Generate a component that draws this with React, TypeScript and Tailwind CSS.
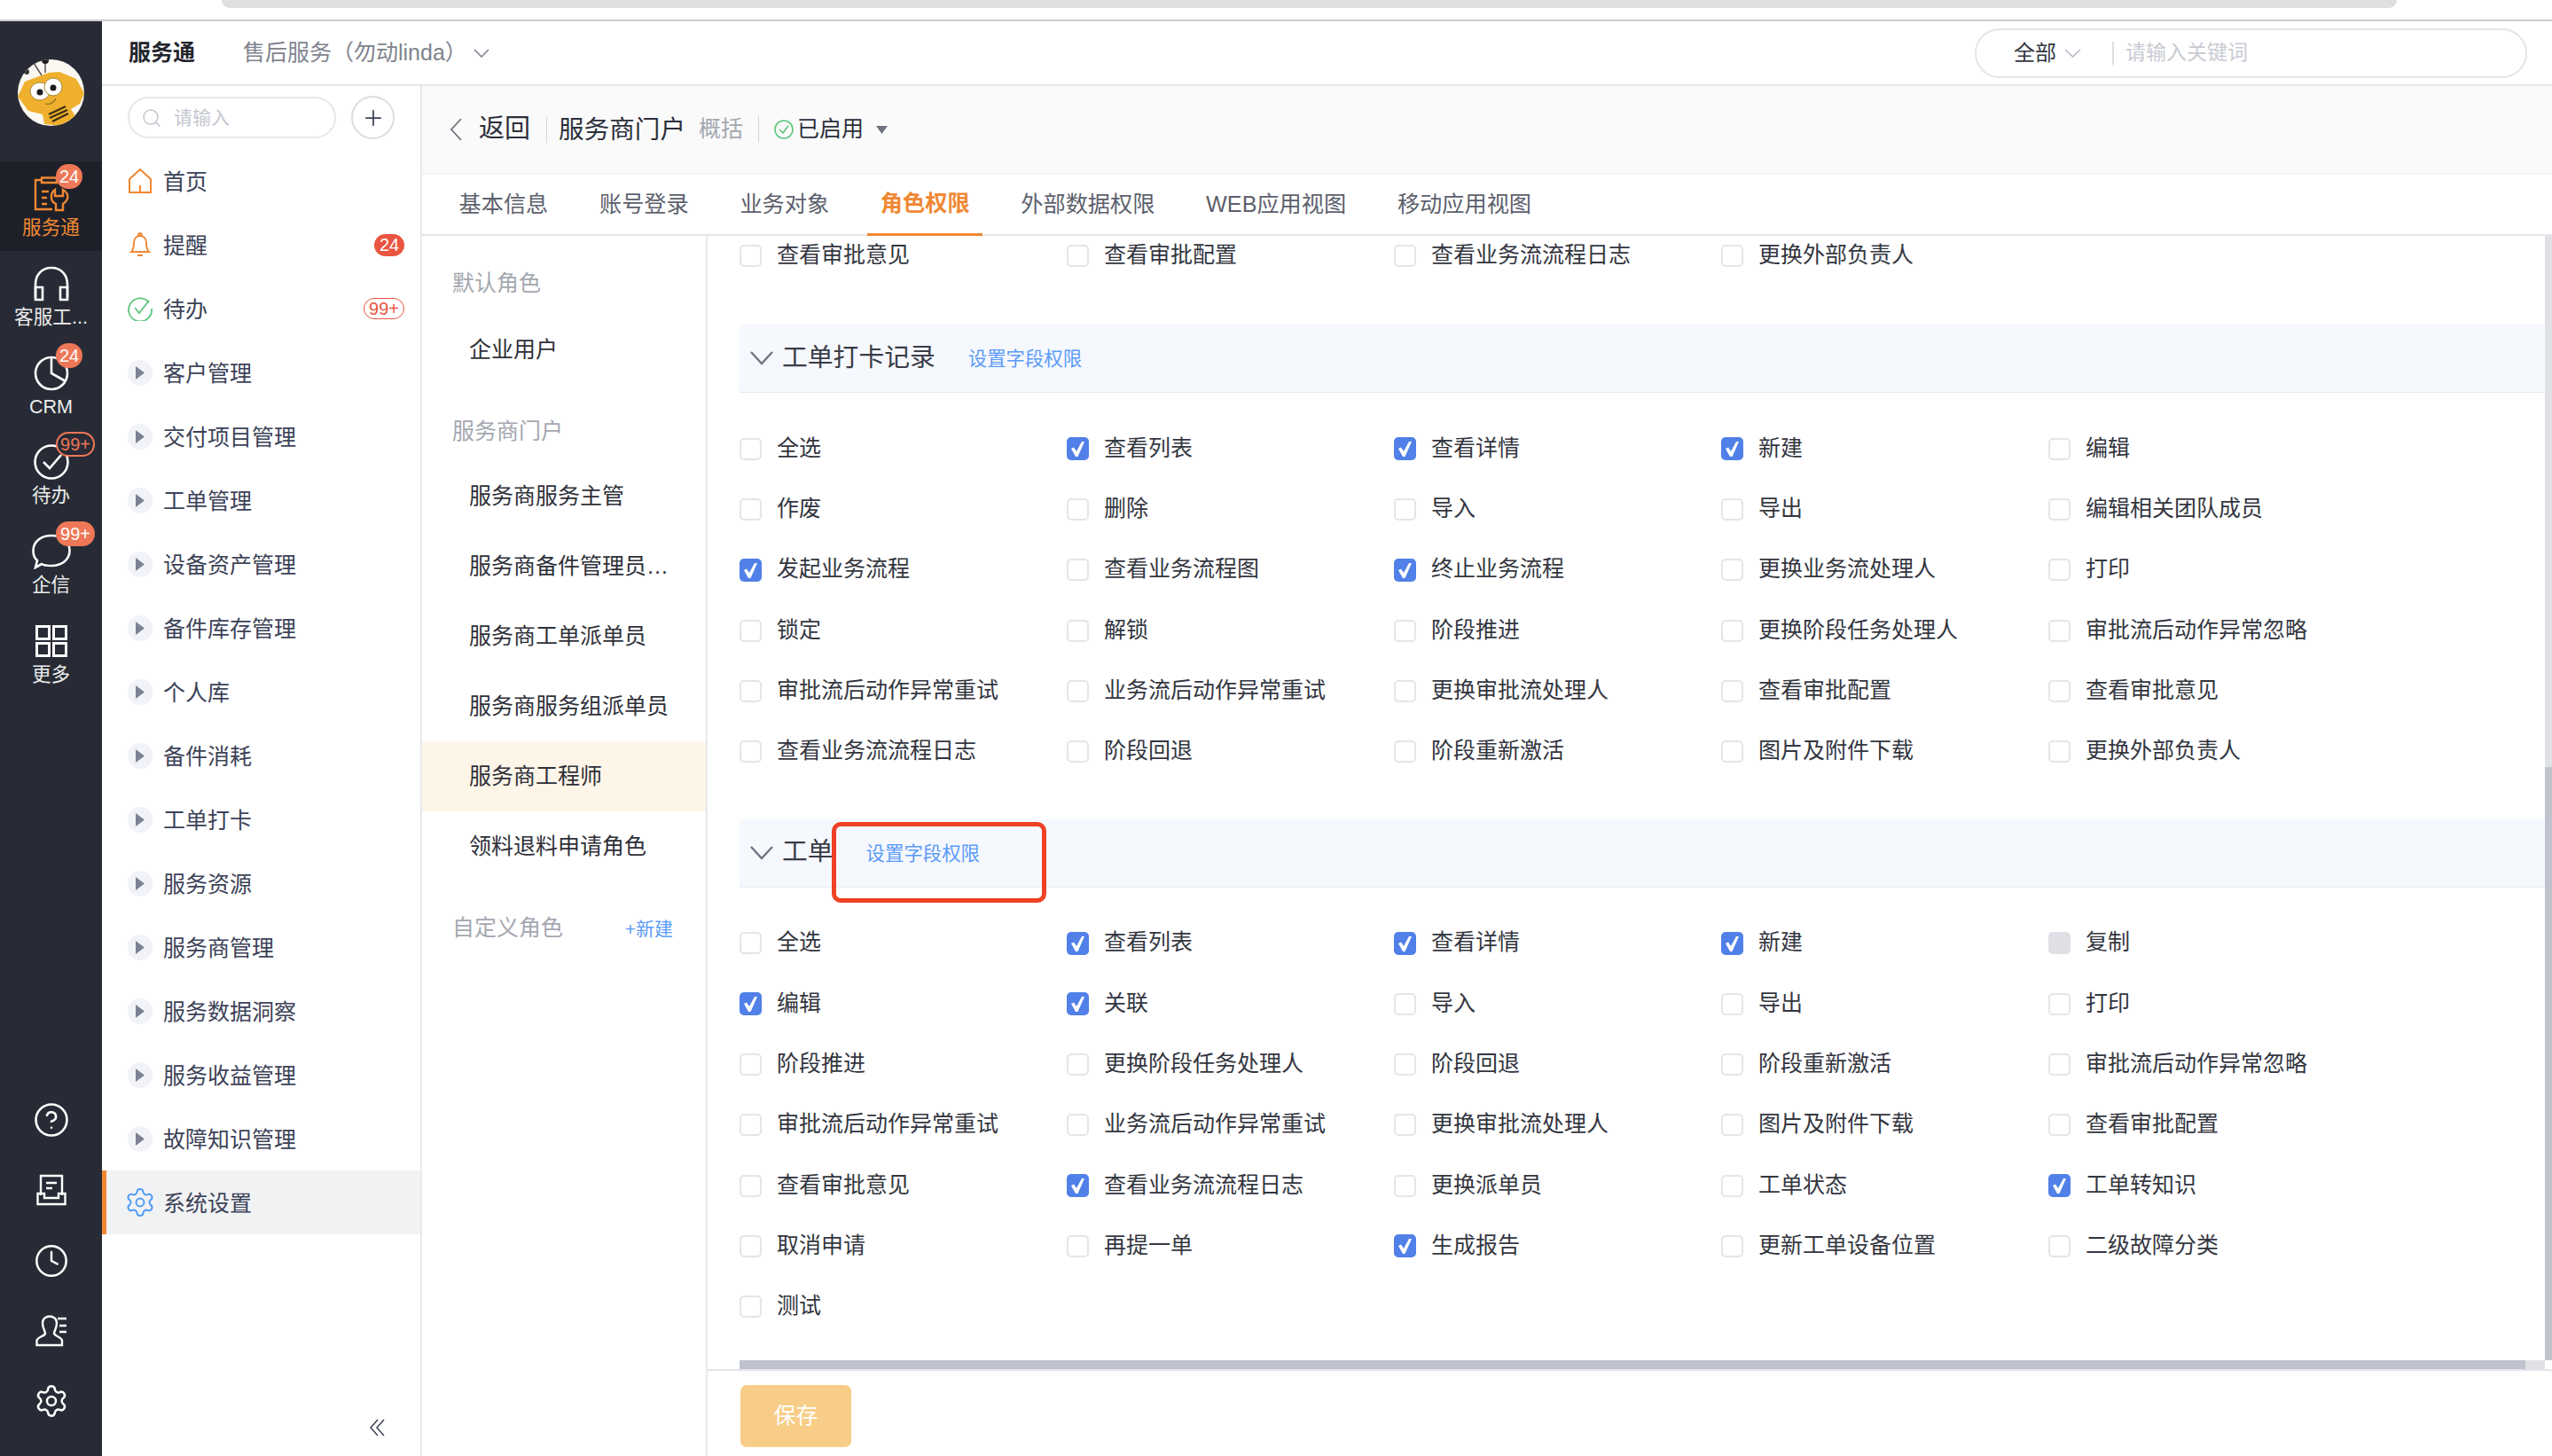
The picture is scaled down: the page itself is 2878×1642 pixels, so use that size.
import { CircleHelp, Clock, Plus, Search, Settings } from "lucide-react";

type Perm = [string, "on" | "off" | "disabled"];

const p = (label: string, state: "on" | "off" | "disabled" = "off"): Perm => [label, state];

const topRow: Perm[] = [p("查看审批意见"), p("查看审批配置"), p("查看业务流流程日志"), p("更换外部负责人")];

const clockInRows: Perm[] = [
  p("全选"), p("查看列表", "on"), p("查看详情", "on"), p("新建", "on"), p("编辑"),
  p("作废"), p("删除"), p("导入"), p("导出"), p("编辑相关团队成员"),
  p("发起业务流程", "on"), p("查看业务流程图"), p("终止业务流程", "on"), p("更换业务流处理人"), p("打印"),
  p("锁定"), p("解锁"), p("阶段推进"), p("更换阶段任务处理人"), p("审批流后动作异常忽略"),
  p("审批流后动作异常重试"), p("业务流后动作异常重试"), p("更换审批流处理人"), p("查看审批配置"), p("查看审批意见"),
  p("查看业务流流程日志"), p("阶段回退"), p("阶段重新激活"), p("图片及附件下载"), p("更换外部负责人"),
];

const ticketRows: Perm[] = [
  p("全选"), p("查看列表", "on"), p("查看详情", "on"), p("新建", "on"), p("复制", "disabled"),
  p("编辑", "on"), p("关联", "on"), p("导入"), p("导出"), p("打印"),
  p("阶段推进"), p("更换阶段任务处理人"), p("阶段回退"), p("阶段重新激活"), p("审批流后动作异常忽略"),
  p("审批流后动作异常重试"), p("业务流后动作异常重试"), p("更换审批流处理人"), p("图片及附件下载"), p("查看审批配置"),
  p("查看审批意见"), p("查看业务流流程日志", "on"), p("更换派单员"), p("工单状态"), p("工单转知识", "on"),
  p("取消申请"), p("再提一单"), p("生成报告", "on"), p("更新工单设备位置"), p("二级故障分类"),
  p("测试"),
];

const menuGroups = [
  "客户管理", "交付项目管理", "工单管理", "设备资产管理", "备件库存管理", "个人库", "备件消耗",
  "工单打卡", "服务资源", "服务商管理", "服务数据洞察", "服务收益管理", "故障知识管理",
];

const tabs = ["基本信息", "账号登录", "业务对象", "角色权限", "外部数据权限", "WEB应用视图", "移动应用视图"];

const BeeLogo = () => (
  <svg width="75" height="75" viewBox="0 0 75 75">
    <defs>
      <clipPath id="bee"><circle cx="37.5" cy="37.5" r="37.5" /></clipPath>
    </defs>
    <g clipPath="url(#bee)">
      <rect width="75" height="75" fill="#fbf8f2" />
      <path d="M0 42 L8 25 L35 15 L47 14 L66 22 L75 38 L70 50 L60 56 L66 65 L50 75 L30 73 L28 62 L12 58 Z" fill="#efb02e" />
      <path d="M27 18 L18 4 M31 15 L31 2" stroke="#555" strokeWidth="1.5" />
      <circle cx="31" cy="1" r="4" fill="#1b1b1b" />
      <circle cx="10" cy="14" r="3" fill="#333" />
      <ellipse cx="25" cy="36" rx="11" ry="10" fill="#fff" stroke="#a98a3a" strokeWidth="1" />
      <ellipse cx="40" cy="31" rx="10" ry="10" fill="#fff" stroke="#a98a3a" strokeWidth="1" />
      <circle cx="25" cy="37" r="3.5" fill="#1c1c1c" />
      <circle cx="40" cy="32" r="3.5" fill="#1c1c1c" />
      <path d="M31 50 Q39 52 43 44" fill="none" stroke="#8a6a20" strokeWidth="1.2" />
      <path d="M35 62 L54 53 M36 66 L56 57 M39 70 L57 61" stroke="#3a2c12" strokeWidth="2.2" />
    </g>
  </svg>
);

const Chevron = ({ w, h, color }: { w: number; h: number; color: string }) => (
  <svg width={w} height={h} viewBox={`0 0 ${w} ${h}`} fill="none" stroke={color} strokeWidth="1.5" className="shrink-0">
    <path d={`M1 1 L${w / 2} ${h - 1} L${w - 1} 1`} />
  </svg>
);

const ServiceIcon = () => (
  <svg width="40" height="40" viewBox="0 0 40 40" fill="none" stroke="#f08833" strokeWidth="2.4">
    <path d="M9 4 H2 V37 H21" />
    <path d="M9 1.5 H26 V7 H9 Z" />
    <path d="M9 17 H17 M9 24 H15 M9 31 H15" />
    <path d="M24 15 V22 H33 V15 C37 17 39 21 38 25 C37 29 34 30 33 31 V38 H25 V31 C23 30 20 28 20 24 C19.500 20 21 17 24 15 Z" />
  </svg>
);

const HeadsetIcon = () => (
  <svg width="40" height="40" viewBox="0 0 40 40" fill="none" stroke="#fff" strokeWidth="2.6">
    <path d="M2 36 V21 C2 10 9 2 20 2 C31 2 38 10 38 21 V36" />
    <path d="M2 24 H10 V38 H2 Z M30 24 H38 V38 H30 Z" />
  </svg>
);

const PieIcon = () => (
  <svg width="40" height="40" viewBox="0 0 40 40" fill="none" stroke="#fff" strokeWidth="2.6">
    <circle cx="20" cy="20" r="18" />
    <path d="M20 2 V20 L36 29" />
  </svg>
);

const TodoIcon = () => (
  <svg width="40" height="40" viewBox="0 0 40 40" fill="none" stroke="#fff" strokeWidth="2.6">
    <circle cx="20" cy="20" r="18.500" />
    <path d="M11 20 L18 27 L31 12" />
  </svg>
);

const ChatIcon = () => (
  <svg width="44" height="40" viewBox="0 0 44 40" fill="none" stroke="#fff" strokeWidth="2.6">
    <path d="M6 30 C2 27 1.500 23 1.500 19 C1.500 9 10 2 22 2 C34 2 42.500 9 42.500 19 C42.500 29 34 36 22 36 C18 36 14 36 11 34 L4 38 Z" />
  </svg>
);

const GridIcon = () => (
  <svg width="36" height="36" viewBox="0 0 36 36" fill="none" stroke="#fff" strokeWidth="3">
    <rect x="1.500" y="1.500" width="14" height="14" />
    <rect x="20.500" y="1.500" width="14" height="14" />
    <rect x="1.500" y="20.500" width="14" height="14" />
    <rect x="20.500" y="20.500" width="14" height="14" />
  </svg>
);

const InboxDocIcon = () => (
  <svg width="34" height="36" viewBox="0 0 34 36" fill="none" stroke="#fff" strokeWidth="2.4">
    <path d="M5 24 V2 H29 V24" />
    <path d="M1.500 22 H9 V27 H25 V22 H32.500 V34 H1.500 Z" />
    <path d="M11 10 H23 M11 16 H18" />
  </svg>
);

const UserListIcon = () => (
  <svg width="36" height="36" viewBox="0 0 36 36" fill="none" stroke="#fff" strokeWidth="2.4">
    <path d="M1.500 34 H30 V29 C30 25 22 24 21 21 C21 18 24 15 24 9 C24 4 20 1.500 16 1.500 C12 1.500 8 4 8 9 C8 15 11 18 11 21 C10 24 1.500 25 1.500 29 Z" />
    <path d="M25 4 H35 M27 12 H35 M27 19 H35" />
  </svg>
);

const RailItem = ({ icon, label, active, badge, outline }: { icon: React.ReactNode; label: string; active?: boolean; badge?: string; outline?: boolean }) => (
  <div className={`relative h-[100.8px] flex flex-col items-center pt-[17px] ${active ? "bg-[#1e2029]" : ""}`}>
    <div className="h-[40px] flex items-center justify-center">{icon}</div>
    <span className={`mt-[4px] text-[21.6px] leading-[28px] whitespace-nowrap ${active ? "text-[#f08833]" : "text-[#eceded]"}`}>{label}</span>
    {badge && (
      <span
        className={`absolute top-[3px] left-[63px] h-[28px] flex items-center justify-center rounded-full text-[20px] leading-none ${
          badge === "24" ? "w-[30px]" : "w-[44px]"
        } ${outline ? "border-2 border-[#ee7757] text-[#ee7757] bg-[#282b35] h-[25px]" : "bg-[#ee7757] text-white"}`}
      >
        {badge}
      </span>
    )}
  </div>
);

const MenuArrow = () => (
  <span className="w-[28px] h-[29px] rounded-full bg-[#f2f3f8] flex items-center justify-center">
    <svg width="10" height="15" viewBox="0 0 10 15"><path d="M0 0 L10 7.500 L0 15 Z" fill="#7c8194" /></svg>
  </span>
);

const MenuItem = ({ icon, label, right, active }: { icon: React.ReactNode; label: string; right?: React.ReactNode; active?: boolean }) => (
  <div className={`h-[72px] flex items-center pl-[29px] pr-[18px] ${active ? "bg-[#f1f2f4] border-l-[5px] border-[#f08833] !pl-[24px]" : ""}`}>
    <span className="w-[28px] h-[28px] flex items-center justify-center shrink-0">{icon}</span>
    <span className="ml-[12px] mt-[3px] text-[25px] text-[#3c4257] flex-1">{label}</span>
    {right}
  </div>
);

const Check = ({ state }: { state: Perm[1] }) => {
  if (state === "on") {
    return (
      <span className="w-[25px] h-[26px] rounded-[5px] bg-[#5080e8] flex items-center justify-center shrink-0">
        <svg width="25" height="26" viewBox="0 0 25 26"><path d="M5 13 L8 11.500 L11 16 L17 5 L20 5 L12.500 22 L10 22 Z" fill="#fff" /></svg>
      </span>
    );
  }
  if (state === "disabled") return <span className="w-[25px] h-[25px] rounded-[5px] bg-[#dfe0e6] shrink-0" />;
  return <span className="w-[25px] h-[25px] rounded-[5px] bg-white border-2 border-[#e3e5ea] shrink-0" />;
};

const PermCell = ({ perm }: { perm: Perm }) => (
  <div className="flex items-center">
    <Check state={perm[1]} />
    <span className="ml-[17px] text-[25px] leading-none -mt-[2px] text-[#33363f] whitespace-nowrap">{perm[0]}</span>
  </div>
);

const SectionHead = ({ title, box }: { title: string; box?: boolean }) => (
  <div className="relative h-[77px] bg-[#f5f8fd] border-b border-[#e9ebee] flex items-center pl-[12px]">
    <svg width="26" height="16" viewBox="0 0 26 16" fill="none" stroke="#6f7482" strokeWidth="2.4"><path d="M1 1 L13 14 L25 1" /></svg>
    <span className="ml-[10px] text-[28.8px] text-[#3a3d48] leading-none -mt-[2px]">{title}</span>
    <a className="ml-[37px] mt-[2px] text-[21.4px] text-[#5b9bf8]">设置字段权限</a>
    {box && <div className="absolute left-[104px] top-[3px] w-[242px] h-[91px] border-[5px] border-[#ee4125] rounded-[10px]" />}
  </div>
);

const RoleHead = ({ label, className }: { label: string; className: string }) => (
  <div className={`flex items-center pl-[34px] pr-[37px] text-[25px] text-[#a4a7b0] ${className}`}>{label}</div>
);

const RoleItem = ({ label, active }: { label: string; active?: boolean }) => (
  <div className={`h-[79px] flex items-center pl-[53px] pr-[20px] text-[25px] text-[#2e3038] whitespace-nowrap ${active ? "bg-[#fdf5e8]" : ""}`}>
    {label}
  </div>
);

export default function App() {
  return (
    <div className="w-[2878px] h-[1642px] flex flex-col overflow-hidden bg-white font-['Liberation_Sans','Noto_Sans_CJK_SC',sans-serif]">
      <div className="h-[24px] shrink-0 border-b-2 border-[#cccccc]">
        <div className="ml-[250px] mr-[175px] h-[9px] bg-[#dfdfdf] rounded-b-[20px]" />
      </div>
      <div className="flex-1 flex min-h-0">
        <aside className="w-[115px] shrink-0 bg-[#282b35] flex flex-col">
          <div className="h-[158px] flex justify-center pt-[43px]"><BeeLogo /></div>
          <RailItem active icon={<ServiceIcon />} label="服务通" badge="24" />
          <RailItem icon={<HeadsetIcon />} label="客服工..." />
          <RailItem icon={<PieIcon />} label="CRM" badge="24" />
          <RailItem icon={<TodoIcon />} label="待办" badge="99+" outline />
          <RailItem icon={<ChatIcon />} label="企信" badge="99+" />
          <RailItem icon={<GridIcon />} label="更多" />
          <div className="mt-auto pb-[22px] flex flex-col items-center">
            <div className="h-[79.4px] flex items-center"><CircleHelp size={42} strokeWidth={1.5} color="#fff" /></div>
            <div className="h-[79.4px] flex items-center"><InboxDocIcon /></div>
            <div className="h-[79.4px] flex items-center"><Clock size={40} strokeWidth={1.5} color="#fff" /></div>
            <div className="h-[79.4px] flex items-center"><UserListIcon /></div>
            <div className="h-[79.4px] flex items-center"><Settings size={40} strokeWidth={1.5} color="#fff" /></div>
          </div>
        </aside>

        <div className="flex-1 min-w-0 flex flex-col">
          <header className="h-[73px] shrink-0 border-b-2 border-[#e4e6ec] flex items-center pl-[30px] pr-[28px]">
            <span className="text-[25px] font-bold text-[#23252d]">服务通</span>
            <span className="ml-[54px] text-[25px] text-[#80838e]">售后服务（勿动linda）</span>
            <span className="ml-[7px]"><Chevron w={18} h={10} color="#7a7f8c" /></span>
            <div className="ml-auto w-[623px] h-[56px] rounded-full border-2 border-[#e3e5ea] flex items-center pl-[42px]">
              <span className="text-[24px] text-[#33363f]">全部</span>
              <span className="ml-[9px]"><Chevron w={19} h={10} color="#b4b7c2" /></span>
              <span className="ml-[35px] w-[2px] h-[26px] bg-[#dcdee4]" />
              <span className="ml-[13px] text-[23px] text-[#c8cad2]">请输入关键词</span>
            </div>
          </header>

          <div className="flex-1 min-h-0 flex">
            <nav className="w-[361px] shrink-0 border-r-2 border-[#e8e9ec] flex flex-col">
              <div className="h-[71px] flex items-center pl-[29px] shrink-0">
                <div className="w-[235px] h-[47px] rounded-full border-2 border-[#e6e7ec] flex items-center pl-[13px]">
                  <Search size={24} strokeWidth={1.5} color="#c4c7d0" />
                  <span className="ml-[13px] text-[21px] text-[#c4c7d0]">请输入</span>
                </div>
                <div className="ml-[17px] w-[49px] h-[49px] rounded-full border-2 border-[#dcdde3] flex items-center justify-center">
                  <Plus size={28} strokeWidth={1.5} color="#3c4257" />
                </div>
              </div>
              <MenuItem
                label="首页"
                icon={<svg width="26" height="28" viewBox="0 0 26 28" fill="none" stroke="#f08833" strokeWidth="2"><path d="M1 12 L13 1 L25 12 V27 H1 Z M13 19 V27" /></svg>}
              />
              <MenuItem
                label="提醒"
                icon={<svg width="24" height="28" viewBox="0 0 24 28" fill="none" stroke="#f08833" strokeWidth="2"><path d="M2 22 C5 19 5 16 5 12 C5 7 8 4 12 4 C16 4 19 7 19 12 C19 16 19 19 22 22 Z M10 4 C10 2 11 1 12 1 C13 1 14 2 14 4 M9 26 H15" /></svg>}
                right={<span className="w-[34px] h-[25px] rounded-full bg-[#ea5440] text-white text-[20px] flex items-center justify-center">24</span>}
              />
              <MenuItem
                label="待办"
                icon={<svg width="28" height="28" viewBox="0 0 28 28" fill="none" stroke="#5ec67d" strokeWidth="1.8"><path d="M24 7 A13 13 0 1 0 27 14" /><path d="M8 13 L13 19 L24 5" /></svg>}
                right={<span className="w-[46px] h-[24px] rounded-full border border-[#ea5440] text-[#ea5440] text-[20px] flex items-center justify-center">99+</span>}
              />
              {menuGroups.map((m) => <MenuItem key={m} label={m} icon={<MenuArrow />} />)}
              <MenuItem
                active
                label="系统设置"
                icon={<Settings size={36} strokeWidth={1.3} color="#4d9bf5" className="shrink-0" />}
              />
              <div className="mt-auto pb-[22px] pr-[40px] flex justify-end">
                <svg width="17" height="20" viewBox="0 0 17 20" fill="none" stroke="#3c4257" strokeWidth="1.5"><path d="M9 1 L1 10 L9 19 M16 1 L8 10 L16 19" /></svg>
              </div>
            </nav>

            <div className="flex-1 min-w-0 flex flex-col">
              <div className="h-[100px] shrink-0 bg-[#fafafa] border-b-2 border-[#f3f3f3] flex items-center pl-[31px]">
                <svg width="15" height="26" viewBox="0 0 15 26" fill="none" stroke="#6f7482" strokeWidth="1.8"><path d="M13 1 L2 13 L13 25" /></svg>
                <span className="ml-[18px] text-[29px] text-[#2c2f3a]">返回</span>
                <span className="ml-[18px] w-[1px] h-[30px] bg-[#d4d6dc]" />
                <span className="ml-[13px] text-[28.6px] text-[#2c2f3a]">服务商门户</span>
                <span className="ml-[15px] text-[25px] text-[#a4a7b0]">概括</span>
                <span className="ml-[17px] w-[1px] h-[30px] bg-[#d4d6dc]" />
                <svg className="ml-[17px]" width="22" height="24" viewBox="0 0 22 24" fill="none" stroke="#5ec67d" strokeWidth="1.6"><circle cx="11" cy="12" r="10" /><path d="M6 12 L10 16 L16 8" /></svg>
                <span className="ml-[4px] text-[25px] text-[#2c2f3a]">已启用</span>
                <svg className="ml-[14px]" width="13" height="9" viewBox="0 0 13 9"><path d="M0 0 H13 L6.500 9 Z" fill="#6f7482" /></svg>
              </div>

              <div className="h-[69px] shrink-0 border-b-2 border-[#e3e5ea] flex pl-[27px] gap-[28.7px]">
                {tabs.map((t) => (
                  <div
                    key={t}
                    className={`h-[69px] px-[14.500px] pb-[1px] flex items-center text-[25.2px] whitespace-nowrap ${
                      t === "角色权限" ? "font-bold text-[#f08833] border-b-[3px] border-[#f08833]" : "text-[#5c606c]"
                    }`}
                  >
                    {t}
                  </div>
                ))}
              </div>

              <div className="flex-1 min-h-0 flex">
                <div className="w-[322px] shrink-0 border-r-2 border-[#e8e9ec]">
                  <RoleHead label="默认角色" className="h-[89px] pt-[18px]" />
                  <RoleItem label="企业用户" />
                  <RoleHead label="服务商门户" className="h-[86px] pt-[20px]" />
                  <RoleItem label="服务商服务主管" />
                  <RoleItem label="服务商备件管理员…" />
                  <RoleItem label="服务商工单派单员" />
                  <RoleItem label="服务商服务组派单员" />
                  <RoleItem active label="服务商工程师" />
                  <RoleItem label="领料退料申请角色" />
                  <div className="h-[84px] pt-[22px] flex items-center pl-[34px] pr-[37px] justify-between">
                    <span className="text-[25px] text-[#a4a7b0]">自定义角色</span>
                    <span className="text-[21px] text-[#5b9bf8] mt-[2px]">+新建</span>
                  </div>
                </div>

                <div className="flex-1 min-w-0 flex flex-col">
                  <div className="flex-1 min-h-0 flex">
                    <div className="flex-1 min-w-0 overflow-hidden pl-[36px]">
                      <div className="h-[44px] grid grid-cols-[repeat(5,369px)]">
                        {topRow.map((c) => <PermCell key={c[0]} perm={c} />)}
                      </div>
                      <div className="mt-[56px]"><SectionHead title="工单打卡记录" /></div>
                      <div className="mt-[29px] grid grid-cols-[repeat(5,369px)] auto-rows-[68.3px]">
                        {clockInRows.map((c) => <PermCell key={c[0]} perm={c} />)}
                      </div>
                      <div className="mt-[42px]"><SectionHead title="工单" box /></div>
                      <div className="mt-[29px] grid grid-cols-[repeat(5,369px)] auto-rows-[68.3px]">
                        {ticketRows.map((c) => <PermCell key={c[0]} perm={c} />)}
                      </div>
                    </div>
                    <div className="w-[8px] shrink-0 bg-[#dfe1e6] flex flex-col justify-end">
                      <div className="h-[669px] bg-[#c0c3cd]" />
                    </div>
                  </div>
                  <div className="h-[10px] shrink-0 ml-[36px] mr-[8px] bg-[#dfe1e6]">
                    <div className="h-full w-[2014px] bg-[#c0c3cd]" />
                  </div>
                  <div className="h-[98px] shrink-0 border-t-2 border-[#e3e5ea] pl-[37px] pt-[16px]">
                    <button className="w-[125px] h-[70px] rounded-[7px] bg-[#f7cd87] text-white text-[25px]">保存</button>
                  </div>
                </div>
              </div>
            </div>
          </div>
        </div>
      </div>
    </div>
  );
}
